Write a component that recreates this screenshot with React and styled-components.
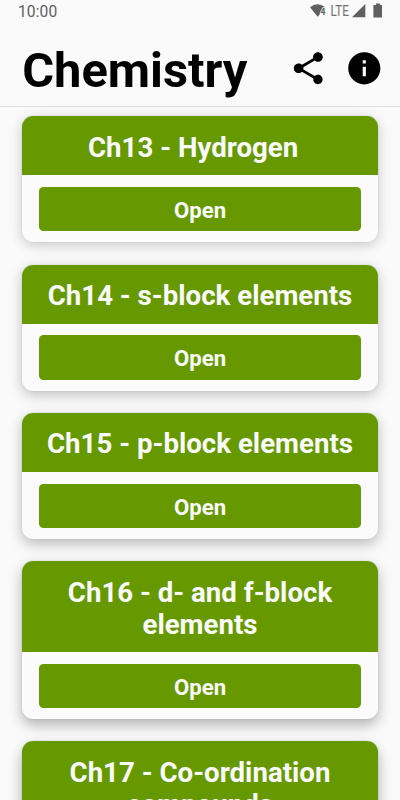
import React from "react";
import styled, { createGlobalStyle } from "styled-components";

const GlobalStyle = createGlobalStyle`
  * { box-sizing: border-box; }
  html { overflow: hidden; }
  body {
    margin: 0;
    background: #fafafa;
    font-family: Roboto, "Noto Sans", sans-serif;
  }
`;

const Screen = styled.div`
  height: 800px;
  overflow: hidden;
  display: flex;
  flex-direction: column;
  background: #fafafa;
`;

const StatusBar = styled.div`
  height: 24px;
  flex: none;
  display: flex;
  justify-content: space-between;
  padding: 0 17px 0 18px;
  color: #5f5f5f;
`;

const Clock = styled.span`
  font-size: 15.6px;
  line-height: 24px;
  letter-spacing: 0.1px;
`;

const StatusIcons = styled.svg`
  width: 74px;
  height: 24px;
  display: block;
`;

const NetworkLabel = styled.text`
  font: 400 14px Roboto, sans-serif;
  fill: #707070;
`;

const BandLabel = styled.text`
  font: 700 8.5px Roboto, sans-serif;
  fill: #606060;
  stroke: #fafafa;
  stroke-width: 1.4px;
  paint-order: stroke;
`;

const Header = styled.header`
  height: 83px;
  flex: none;
  display: flex;
  align-items: center;
  justify-content: space-between;
  padding: 6px 16.8px 0 22.2px;
  border-bottom: 1px solid #dedede;
`;

const Title = styled.h1`
  margin: 0;
  padding-top: 6px;
  font-size: 48.8px;
  line-height: 60px;
  font-weight: 700;
  color: #000;
`;

const Actions = styled.div`
  display: flex;
  align-items: center;
  gap: 17.2px;
`;

const IconButton = styled.button`
  padding: 0;
  border: 0;
  background: none;
  display: block;
  color: #000;
`;

const ActionIcon = styled.svg`
  display: block;
  width: 38.6px;
  height: 38.6px;
  fill: currentColor;
`;

const List = styled.main`
  flex: 1;
  min-height: 0;
  overflow: hidden;
  padding: 9.4px 22.2px 0;
  display: flex;
  flex-direction: column;
  gap: 22.3px;
`;

const Card = styled.section`
  flex: none;
  border-radius: 11px;
  background: #fbfbfb;
  box-shadow: 0 ${(p) => p.$depth}px 14px rgba(0, 0, 0, ${(p) => p.$shade}), 0 0 2px rgba(0, 0, 0, 0.12);
`;

const CardTitle = styled.h2`
  margin: 0;
  padding: 15.4px 20px 11.7px;
  border-radius: 11px 11px 0 0;
  background: #669900;
  color: #fafafa;
  text-align: center;
  white-space: pre-wrap;
  font-size: 27.65px;
  line-height: 32px;
  font-weight: 700;
`;

const CardBody = styled.div`
  padding: 11.6px 16.7px 11px;
`;

const OpenButton = styled.button`
  display: block;
  width: 100%;
  height: 44.3px;
  padding: 1px 0 0;
  border: 0;
  border-radius: 4.5px;
  background: #669900;
  color: #fafafa;
  font: 700 22.2px/44px Roboto, sans-serif;
`;

const chapters = [
  { name: "Ch13 - Hydrogen\u00a0\u00a0", depth: 3, shade: 0.2 },
  { name: "Ch14 - s-block elements", depth: 4, shade: 0.23 },
  { name: "Ch15 - p-block elements", depth: 5, shade: 0.26 },
  { name: "Ch16 - d- and f-block elements", depth: 6, shade: 0.29 },
  { name: "Ch17 - Co-ordination compounds", depth: 7, shade: 0.3 },
];

function StatusGlyphs() {
  return (
    <StatusIcons viewBox="309 0 74 24" fill="#606060">
      <path d="M310 7.2Q317.500 1.500 325.300 7.200L317.700 16.800Z" />
      <BandLabel x="320.500" y="15">4</BandLabel>
      <NetworkLabel x="330.500" y="15.800" textLength="18.500" lengthAdjust="spacingAndGlyphs">LTE</NetworkLabel>
      <path d="M365.300 4V17.200H352Z" />
      <path d="M376 3.500h4v1.500h2v12.500h-8.600V5H376Z" />
    </StatusIcons>
  );
}

export default function App() {
  return (
    <>
      <GlobalStyle />
      <Screen>
        <StatusBar>
          <Clock>10:00</Clock>
          <StatusGlyphs />
        </StatusBar>
        <Header>
          <Title>Chemistry</Title>
          <Actions>
            <IconButton aria-label="Share">
              <ActionIcon viewBox="0 0 24 24">
                <path d="M18 16.080c-.76 0-1.440.3-1.960.77L8.910 12.700c.05-.23.09-.46.09-.7s-.04-.47-.09-.7l7.050-4.110c.54.5 1.250.81 2.040.81 1.660 0 3-1.340 3-3s-1.340-3-3-3-3 1.340-3 3c0 .24.04.47.09.7L8.040 9.810C7.500 9.310 6.790 9 6 9c-1.660 0-3 1.340-3 3s1.340 3 3 3c.79 0 1.500-.31 2.040-.81l7.120 4.160c-.05.21-.08.43-.08.65 0 1.610 1.310 2.920 2.920 2.920s2.920-1.310 2.920-2.920-1.310-2.920-2.920-2.920z" />
              </ActionIcon>
            </IconButton>
            <IconButton aria-label="Information">
              <ActionIcon viewBox="0 0 24 24">
                <path d="M12 2C6.480 2 2 6.480 2 12s4.480 10 10 10 10-4.480 10-10S17.520 2 12 2zm1 15h-2v-6h2v6zm0-8h-2V7h2v2z" />
              </ActionIcon>
            </IconButton>
          </Actions>
        </Header>
        <List>
          {chapters.map((c) => (
            <Card key={c.name} $depth={c.depth} $shade={c.shade}>
              <CardTitle>{c.name}</CardTitle>
              <CardBody>
                <OpenButton>Open</OpenButton>
              </CardBody>
            </Card>
          ))}
        </List>
      </Screen>
    </>
  );
}
